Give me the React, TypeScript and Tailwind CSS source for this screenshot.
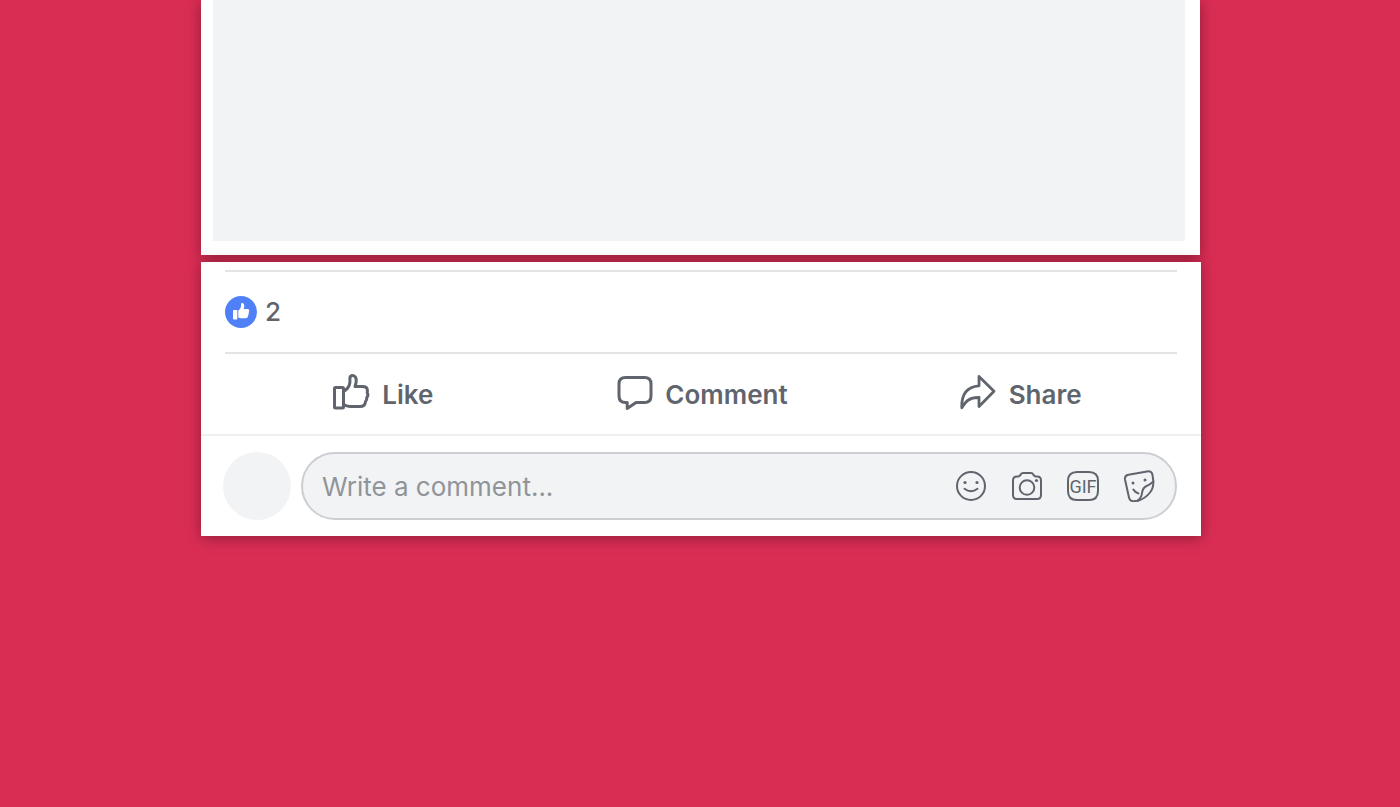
import React, { useState } from 'react';

const LikeIcon = () => (
  <svg className="w-10 h-10" viewBox="0 2 40 40" fill="none" stroke="currentColor" strokeWidth="3" strokeLinejoin="round" strokeLinecap="round">
    <rect x="3.5" y="15.5" width="9" height="20.5" rx="1" />
    <path d="M12.5 19.5C16 17.5 18.4 14.5 18.9 10.5V6.5C18.9 4.4 20.1 3.5 21.6 3.5C24.4 3.5 25.4 6.2 25.2 9.2C25.1 11.4 24.6 12.8 24 14.5H31.2C34.6 14.5 36.4 15.8 36.4 18.2C36.4 19.3 36.4 20 36.2 20.8C37.2 22.4 37 24.2 35.8 25.6C36 27.2 35.6 28.6 34.4 29.8C34.2 32.8 32.4 34.5 29 34.5H19C16.5 34.5 14.6 34 12.5 32.6" />
  </svg>
);

const CommentIcon = () => (
  <svg className="w-10 h-10" viewBox="0 2 40 40" fill="none" stroke="currentColor" strokeWidth="3" strokeLinejoin="round">
    <path d="M11.5 5.5H30.5Q37 5.5 37 12V24Q37 30.5 30.5 30.5H22L13.2 36.5V30.5H11.5Q5 30.5 5 24V12Q5 5.5 11.5 5.5Z" />
  </svg>
);

const ShareIcon = () => (
  <svg className="w-10 h-10" viewBox="0 2 40 40" fill="none" stroke="currentColor" strokeWidth="2.8" strokeLinejoin="round">
    <path d="M21 4.5L36 19.2L21 34.5V25.5C11.5 25.2 8 29 3.8 35.7C3.3 23 8.5 14.7 21 13.8Z" />
  </svg>
);

const SmileIcon = () => (
  <svg className="w-8 h-8" viewBox="0 0 32 32" fill="none" stroke="currentColor" strokeWidth="2" strokeLinecap="round">
    <circle cx="16" cy="16" r="14" />
    <path d="M9.5 18.8Q16 23.6 22.5 18.8" />
    <circle cx="10" cy="12.5" r="1.6" fill="currentColor" stroke="none" />
    <circle cx="22" cy="12.5" r="1.6" fill="currentColor" stroke="none" />
  </svg>
);

const CameraIcon = () => (
  <svg className="w-8 h-8" viewBox="0 0 32 32" fill="none" stroke="currentColor" strokeWidth="2" strokeLinejoin="round">
    <path d="M6 6.5H7.5C9.5 6.5 9.5 3 12 3H20C22.5 3 22.5 6.5 24.5 6.5H26Q30 6.5 30 10.5V25Q30 29 26 29H6Q2 29 2 25V10.5Q2 6.5 6 6.5Z" />
    <circle cx="16" cy="17.5" r="7.3" />
    <circle cx="25.5" cy="10.5" r="1.6" fill="currentColor" stroke="none" />
  </svg>
);

const GifIcon = () => (
  <svg className="w-8 h-8" viewBox="0 0 32 32" fill="none" stroke="currentColor" strokeWidth="2">
    <path d="M10 2H22Q31 2 31 11V21Q31 30 22 30H10Q1 30 1 21V11Q1 2 10 2Z" />
    <text x="16" y="22.5" textAnchor="middle" fontFamily="Roboto, sans-serif" fontSize="18" fontWeight="400" fill="currentColor" stroke="none">
      GIF
    </text>
  </svg>
);

const StickerIcon = () => (
  <svg className="w-8 h-8" viewBox="0 0 32 32" fill="none" stroke="currentColor" strokeWidth="2" strokeLinejoin="round" strokeLinecap="round">
    <path d="M5.5 4.8L24 1.4Q28.8 .6 29.5 5L30.2 10Q31 17.5 27 22.5Q22 28.8 15 30.7L10.5 31.2Q6.8 31.2 6 27.5L2 9.5Q1.4 5.5 5.5 4.8Z" />
    <path d="M30.3 11.5C28 13.5 27 14.5 23.5 16C18.5 18.2 19.5 22.5 18.5 25.5C17.8 28 16.5 29.5 14.5 30.7" />
    <path d="M10.4 19.6Q12.6 22.8 15.5 23.4" />
    <circle cx="10" cy="13" r="1.5" fill="currentColor" stroke="none" />
    <circle cx="22" cy="10" r="1.5" fill="currentColor" stroke="none" />
  </svg>
);

const actions = [
  { label: 'Like', icon: <LikeIcon /> },
  { label: 'Comment', icon: <CommentIcon /> },
  { label: 'Share', icon: <ShareIcon /> },
];

const attachments = [
  { label: 'Insert an emoji', icon: <SmileIcon /> },
  { label: 'Attach a photo', icon: <CameraIcon /> },
  { label: 'Post a GIF', icon: <GifIcon /> },
  { label: 'Post a sticker', icon: <StickerIcon /> },
];

const App: React.FC = () => {
  const [comment, setComment] = useState('');

  return (
    <main className="min-h-screen bg-[#da2d54] pl-0.5 font-['Inter',sans-serif] text-[#60656d]">
      <div className="max-w-[1000px] mx-auto flex flex-col gap-[7px]">
        {/* Post media */}
        <section className="bg-white mr-px pl-3 pr-[15px] pb-3.5 shadow-[0_2px_14px_rgba(0,0,0,0.35)]">
          <div className="h-[241px] bg-[#f2f3f5]"></div>
        </section>

        {/* Feedback */}
        <section className="bg-white pt-2 shadow-[0_2px_14px_rgba(0,0,0,0.35)]">
          <div className="mx-6 h-[84px] flex items-center gap-2 border-y-2 border-[#e5e3e4]">
            <span className="w-8 h-8 rounded-full bg-[#4f80f7] flex items-center justify-center">
              <svg className="w-8 h-8" viewBox="0 0 32 32" fill="white">
                <rect x="8" y="14" width="4.3" height="9.5" rx=".8" />
                <path d="M13.3 14.5C15.2 13.3 16 11.5 16 9.5V8Q16 7 17 7C18.7 7 19.3 8.5 19.3 10.3C19.3 11.5 19 12.3 18.6 13H22.6Q24.3 13 24.3 14.5Q24.3 15.3 23.8 15.8Q24.3 17 23.4 17.9Q23.8 19.2 22.9 20Q23 22.3 20.7 22.3H16.5C15 22.3 14.4 21.8 13.3 21.5Z" />
              </svg>
            </span>
            <span className="text-[26px] leading-8 font-medium">2</span>
          </div>

          <div className="px-[22px] h-20 grid grid-cols-3">
            {actions.map((action) => (
              <button key={action.label} className="flex items-center justify-center gap-[11px] text-[26px] font-semibold">
                {action.icon}
                {action.label}
              </button>
            ))}
          </div>

          <div className="border-t-2 border-[#f0f0f1] pl-[22px] pr-6 py-4 flex items-center gap-2.5">
            <div className="w-[68px] h-[68px] shrink-0 rounded-full bg-[#f2f3f5]"></div>
            <div className="flex-1 h-[68px] pl-[19px] pr-5 flex items-center rounded-full border-2 border-[#ccced2] bg-[#f2f3f5]">
              <input
                type="text"
                aria-label="Write a comment"
                placeholder="Write a comment..."
                value={comment}
                onChange={(e) => setComment(e.target.value)}
                className="flex-1 min-w-0 bg-transparent text-[26px] placeholder:text-[#90949a] focus:outline-none"
              />
              <div className="flex gap-6">
                {attachments.map((item) => (
                  <button key={item.label} aria-label={item.label}>
                    {item.icon}
                  </button>
                ))}
              </div>
            </div>
          </div>
        </section>
      </div>
    </main>
  );
};

export default App;
